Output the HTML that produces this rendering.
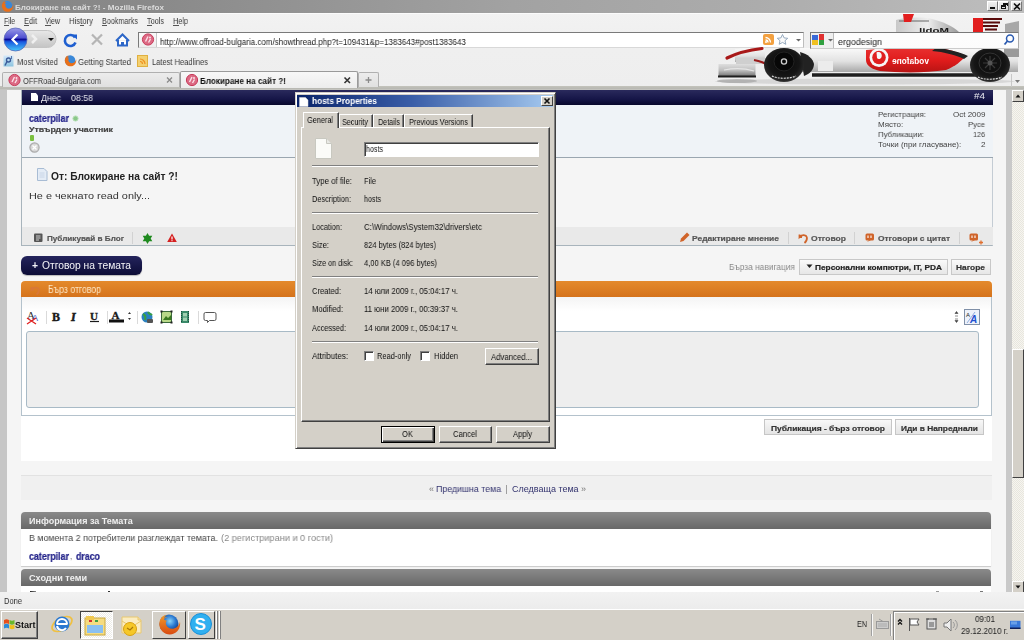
<!DOCTYPE html>
<html><head><meta charset="utf-8">
<style>
*{margin:0;padding:0;box-sizing:border-box}
html,body{width:1024px;height:640px;overflow:hidden;background:#f5f5f5;font-family:"Liberation Sans",sans-serif;position:relative}
.a{position:absolute}
.t{position:absolute;white-space:nowrap;transform-origin:0 0;will-change:transform}
svg{position:absolute;overflow:visible}
</style></head><body>
<div class="a" style="left:0px;top:88px;width:7px;height:505px;background:#c6c6c6"></div>
<div class="a" style="left:7px;top:88px;width:15px;height:505px;background:#f5f5f5"></div>
<div class="a" style="left:993px;top:88px;width:13px;height:505px;background:#f5f5f5"></div>
<div class="a" style="left:1006px;top:88px;width:6px;height:505px;background:#c9c9c9"></div>
<div class="a" style="left:0px;top:0px;width:1024px;height:13px;background:linear-gradient(90deg,#868686 0%,#8a8a8a 16%,#a2a2a2 50%,#acacac 74%,#bebebe 100%)"></div>
<div class="t" style="left:15px;top:4px;font-size:8px;line-height:8px;font-weight:bold;color:#dcdcdc;transform:scaleX(1.012);">Блокиране на сайт ?! - Mozilla Firefox</div>
<svg style="left:0;top:0" width="14" height="13">
<g transform="translate(0.5 0) scale(0.55)"><circle cx="12" cy="11" r="9.5" fill="#3a88d8"/><path d="M3.5 6c-2 4-1.5 9 2 12.5 4 4 11 4 15-0.5 2.5-3 3-6.5 2.5-9.5-0.5 3-2.5 6-6 7-3.5 1-7-1-8-4-0.5-1.5 0-3 1-4-1.5 0-2.5-0.5-3-1.5 1-1 2.5-1.5 4-1-1.5-1-3-1-4 0 0.5-1.5 1.5-2.5 3-3-3 0-5 1.5-6.5 4z" fill="#e8701a"/></g>
</svg>
<div class="a" style="left:987px;top:1px;width:11px;height:10px;background:linear-gradient(#f0f0f0,#d8d8d8);border:1px solid #fff;border-right-color:#777;border-bottom-color:#777"></div>
<div class="a" style="left:998px;top:1px;width:11px;height:10px;background:linear-gradient(#f0f0f0,#d8d8d8);border:1px solid #fff;border-right-color:#777;border-bottom-color:#777"></div>
<div class="a" style="left:1011px;top:1px;width:11px;height:10px;background:linear-gradient(#f0f0f0,#d8d8d8);border:1px solid #fff;border-right-color:#777;border-bottom-color:#777"></div>
<div class="a" style="left:990px;top:7px;width:5px;height:2px;background:#111"></div>
<div class="a" style="left:1001px;top:5px;width:5px;height:4px;border:1px solid #111;border-top-width:2px"></div>
<div class="a" style="left:1003px;top:3px;width:5px;height:3px;border-top:2px solid #111;border-right:1px solid #111"></div>
<svg style="left:1013px;top:3px" width="8" height="7"><path d="M1 0.5L7 6.5M7 0.5L1 6.5" stroke="#111" stroke-width="1.6"/></svg>
<div class="a" style="left:0px;top:13px;width:1024px;height:75px;background:linear-gradient(#f2f2f2 0%,#efefef 50%,#eeeeee 100%)"></div>
<div class="a" style="left:0px;top:13px;width:1024px;height:1px;background:#fbfbfb"></div>
<div class="t" style="left:4px;top:17px;font-size:9px;line-height:9px;color:#3a3a3a;transform:scaleX(0.759);">File</div>
<div class="t" style="left:24px;top:17px;font-size:9px;line-height:9px;color:#3a3a3a;transform:scaleX(0.838);">Edit</div>
<div class="t" style="left:45px;top:17px;font-size:9px;line-height:9px;color:#3a3a3a;transform:scaleX(0.775);">View</div>
<div class="t" style="left:69px;top:17px;font-size:9px;line-height:9px;color:#3a3a3a;transform:scaleX(0.857);">History</div>
<div class="t" style="left:102px;top:17px;font-size:9px;line-height:9px;color:#3a3a3a;transform:scaleX(0.800);">Bookmarks</div>
<div class="t" style="left:147px;top:17px;font-size:9px;line-height:9px;color:#3a3a3a;transform:scaleX(0.809);">Tools</div>
<div class="t" style="left:173px;top:17px;font-size:9px;line-height:9px;color:#3a3a3a;transform:scaleX(0.810);">Help</div>
<div class="a" style="left:4px;top:25px;width:5px;height:1px;background:#555"></div>
<div class="a" style="left:24px;top:25px;width:5px;height:1px;background:#555"></div>
<div class="a" style="left:45px;top:25px;width:6px;height:1px;background:#555"></div>
<div class="a" style="left:80px;top:25px;width:4px;height:1px;background:#555"></div>
<div class="a" style="left:102px;top:25px;width:5px;height:1px;background:#555"></div>
<div class="a" style="left:147px;top:25px;width:5px;height:1px;background:#555"></div>
<div class="a" style="left:173px;top:25px;width:6px;height:1px;background:#555"></div>
<svg style="left:0;top:26px" width="140" height="28">
<defs><linearGradient id="bk" x1="0" y1="0" x2="0" y2="1"><stop offset="0" stop-color="#9a9ae8"/><stop offset="0.42" stop-color="#5050d0"/><stop offset="0.5" stop-color="#0c0c98"/><stop offset="0.6" stop-color="#1a5ae0"/><stop offset="1" stop-color="#48c8f8"/></linearGradient>
<linearGradient id="fw" x1="0" y1="0" x2="0" y2="1"><stop offset="0" stop-color="#e8e8e8"/><stop offset="1" stop-color="#c4c4c4"/></linearGradient></defs>
<rect x="14" y="4.5" width="42" height="17" rx="8.5" fill="url(#fw)" stroke="#c4c4c4"/>
<path d="M32 9l4 4-4 4" stroke="#f0f0f0" stroke-width="2.5" fill="none"/>
<path d="M48 12h6l-3 3z" fill="#111"/>
<circle cx="15.5" cy="13.5" r="11.5" fill="url(#bk)" stroke="#5a6ab8" stroke-width="0.8"/>
<path d="M17.5 8.5l-5 5 5 5" stroke="#fff" stroke-width="2.2" fill="none"/>
<path d="M75 11.5a5.5 5.5 0 1 0 0.5 5" stroke="#1f5fd0" stroke-width="2.6" fill="none"/>
<path d="M71.5 8.5h5.5v5z" fill="#1f5fd0"/>
<path d="M92 8.5l10 10M102 8.5l-10 10" stroke="#b5b5b5" stroke-width="2.2"/>
<path d="M116 15l6.5-6.5 6.5 6.5M118 14v5.5h9v-5.5" stroke="#2d67c8" stroke-width="2" fill="#fff"/>
<rect x="121" y="16" width="3" height="3.5" fill="#2d67c8"/>
</svg>
<div class="a" style="left:138px;top:32px;width:666px;height:16px;background:#fff;border:1px solid #7a7a7a;border-right-color:#bdbdbd;border-bottom-color:#d8d8d8"></div>
<div class="a" style="left:139px;top:33px;width:18px;height:14px;background:linear-gradient(#fafafa,#eeeeee);border-right:1px solid #c8c8c8"></div>
<svg style="left:140px;top:33px" width="16" height="14"><circle cx="8" cy="6.5" r="5.6" fill="#dc6a84" stroke="#c83a5a" stroke-width="1"/><path d="M5.5 8.5l2.5-5M8.5 9.5l2-3.5" stroke="#fbe0e8" stroke-width="1.4"/><circle cx="10" cy="4.5" r="1" fill="#fbe0e8"/></svg>
<div class="t" style="left:160px;top:38px;font-size:9px;line-height:9px;color:#222;transform:scaleX(0.889);">http://www.offroad-bulgaria.com/showthread.php?t=109431&amp;p=1383643#post1383643</div>
<svg style="left:0;top:0" width="1024" height="88">
<defs>
<linearGradient id="cb" x1="0" y1="0" x2="0" y2="1"><stop offset="0" stop-color="#fafafa"/><stop offset="0.55" stop-color="#e2e2e2"/><stop offset="1" stop-color="#a8a8a8"/></linearGradient>
<linearGradient id="ab" x1="0" y1="0" x2="1" y2="0"><stop offset="0" stop-color="#c8c8c8"/><stop offset="0.5" stop-color="#eeeeee"/><stop offset="1" stop-color="#9a9a9a"/></linearGradient>
<linearGradient id="wg" x1="0" y1="0" x2="0" y2="1"><stop offset="0" stop-color="#dedede"/><stop offset="0.5" stop-color="#bdbdbd"/><stop offset="1" stop-color="#6a6a6a"/></linearGradient>
<linearGradient id="rd" x1="0" y1="0" x2="0" y2="1"><stop offset="0" stop-color="#e83030"/><stop offset="0.5" stop-color="#e01c1c"/><stop offset="1" stop-color="#b81414"/></linearGradient>
<radialGradient id="tyre" cx="50%" cy="45%" r="55%"><stop offset="0" stop-color="#080808"/><stop offset="0.7" stop-color="#151515"/><stop offset="0.92" stop-color="#262626"/><stop offset="1" stop-color="#3a3a3a"/></radialGradient>
</defs>
<ellipse cx="865" cy="81.5" rx="150" ry="3" fill="#d4d4d4" opacity="0.9"/>
<path d="M896 32v-12c12-3 26-3 36-1c12 3 20 7 27 13z" fill="url(#ab)"/>
<path d="M899 21h30" stroke="#666" stroke-width="1"/>
<path d="M903 14h11l-3 8h-7z" fill="#e21e1e"/>
<text x="-949" y="32.5" transform="scale(-1 1)" font-family="Liberation Sans" font-weight="bold" font-size="8" fill="#1a1a1a" textLength="30" lengthAdjust="spacingAndGlyphs">Mobil</text>
<path d="M1005 32v-8l14-3v11z" fill="#a8a8a8"/>
<rect x="973" y="18" width="10" height="14" fill="#e21e1e"/>
<path d="M983 19h19M983 22.5h17M983 26h15M985 29.5h12" stroke="#5a0c0c" stroke-width="2"/>
<path d="M800 48h218v24h-218z" fill="url(#cb)"/>
<path d="M1004 48h15v9h-15z" fill="#9a9a9a"/>
<path d="M735 49c10-1 20-1 30-1v13c-10 1-20 2-30 1z" fill="url(#cb)"/>
<path d="M727 58c10-5 22-8 35-9.5" stroke="#a81818" stroke-width="3.2" fill="none" stroke-linecap="round"/>
<path d="M736 58h30v6h-30z" fill="#cfcfcf"/>
<path d="M754 60c6 1 11 3 15 6" stroke="#9a1a1a" stroke-width="2" fill="none"/>
<rect x="718.5" y="64" width="37" height="13" fill="url(#wg)"/>
<path d="M724 70c10-2 20-2 30 1" stroke="#e6e6e6" stroke-width="1.2" fill="none"/>
<path d="M718 76.5h38" stroke="#1e1e1e" stroke-width="1.8"/>
<ellipse cx="737" cy="81" rx="20" ry="2" fill="#9a9a9a" opacity="0.6"/>
<path d="M818 61h15v10h-15z" fill="#ececec"/>
<path d="M812 75h190" stroke="#1e1e1e" stroke-width="3.5"/>
<path d="M866 50c25-2 55-2 74-2c12 2 20 5 26 8c-5 5-10 10-20 14c-20 3-45 3-66 1c-8-2-14-5-14-11c0-4 0-7 0-10z" fill="url(#rd)"/>
<path d="M936 48c12 1 24 4 32 8l-4 3c-8-4-20-7-32-8z" fill="#222"/>
<circle cx="879" cy="57.5" r="9.5" fill="#f6f6f6"/><circle cx="879" cy="57.5" r="6.8" fill="#e02020"/><path d="M876.5 52.5c3.5-1.5 6 1 5 4.5-1 2.5-3.5 2.5-4.5 1" fill="#f6f6f6"/>
<text x="-929" y="63.5" transform="scale(-1 1)" font-family="Liberation Sans" font-weight="bold" font-size="8.5" fill="#fff" textLength="37" lengthAdjust="spacingAndGlyphs">vodafone</text>
<path d="M800 52c8 2 13 7 14 12c0 5-4 10-10 12z" fill="#222"/>
<ellipse cx="784" cy="65" rx="20" ry="17" fill="url(#tyre)"/>
<ellipse cx="784" cy="61.5" rx="10" ry="9.5" fill="#070707" stroke="#222"/>
<circle cx="784" cy="61.5" r="2.6" fill="none" stroke="#cfcfcf" stroke-width="1.3"/>
<path d="M772 76c6 3 18 3 24 0" stroke="#ddd" stroke-width="1.2" fill="none" stroke-dasharray="2 1"/>
<ellipse cx="990" cy="65" rx="20" ry="17" fill="url(#tyre)"/>
<ellipse cx="990" cy="63" rx="11" ry="10" fill="#111" stroke="#333"/>
<path d="M983 63h14M990 56v14M985 58l10 10M995 58l-10 10" stroke="#3a3a3a" stroke-width="1.2"/>
<circle cx="990" cy="63" r="2.5" fill="#555"/>
<path d="M978 77c6 3 18 3 24 0" stroke="#ddd" stroke-width="1.2" fill="none" stroke-dasharray="2 1"/>
</svg>
<svg style="left:763px;top:34px" width="42" height="12">
<rect x="0" y="0" width="11" height="11" rx="2" fill="#f2a040"/>
<path d="M2.5 3.5a5 5 0 0 1 5 5M2.5 6a2.5 2.5 0 0 1 2.5 2.5" stroke="#fff" stroke-width="1.3" fill="none"/><circle cx="3" cy="8" r="1" fill="#fff"/>
<path d="M19.5 0.5l1.6 3.4 3.6 0.4-2.7 2.4 0.8 3.6-3.3-1.9-3.3 1.9 0.8-3.6-2.7-2.4 3.6-0.4z" fill="#fafafa" stroke="#8aa0b8" stroke-width="0.9"/>
<path d="M33 5h5l-2.5 2.5z" fill="#666"/>
</svg>
<div class="a" style="left:810px;top:32px;width:209px;height:17px;background:rgba(255,255,255,0.82);border:1px solid #7a7a7a;border-right-color:#aaa;border-bottom-color:#ccc"></div>
<div class="a" style="left:811px;top:33px;width:23px;height:15px;background:rgba(235,235,235,0.8);border-right:1px solid #bbb"></div>
<svg style="left:812px;top:34px" width="200" height="12">
<rect x="0" y="1" width="6" height="5" fill="#3a6ad8"/><rect x="7" y="0" width="5" height="6" fill="#e03030"/><rect x="0" y="6" width="6" height="5" fill="#f0c020"/><rect x="7" y="6" width="5" height="5" fill="#30a040"/>
<path d="M16 5h5l-2.5 2.5z" fill="#666"/>
<circle cx="198" cy="4.5" r="3.5" stroke="#2a5ab0" stroke-width="1.5" fill="none"/><path d="M195.5 7l-3 3.5" stroke="#2a5ab0" stroke-width="1.8"/>
</svg>
<div class="t" style="left:838px;top:38px;font-size:9px;line-height:9px;color:#222;transform:scaleX(0.988);">ergodesign</div>
<svg style="left:3px;top:55px" width="150" height="13">
<defs><linearGradient id="mv" x1="0" y1="0" x2="0" y2="1"><stop offset="0" stop-color="#d4e8fa"/><stop offset="1" stop-color="#8cc4e0"/></linearGradient></defs><rect x="0.5" y="0.5" width="10" height="11" fill="url(#mv)"/><circle cx="5.5" cy="5" r="2" fill="none" stroke="#3a5a98" stroke-width="1.4"/><path d="M4 6.5l-2 4" stroke="#3a5a98" stroke-width="1.4"/><path d="M8.5 1v3" stroke="#3a5a98" stroke-width="0.8"/>
<g transform="translate(60.5 -0.5) scale(0.55)"><circle cx="12" cy="11" r="9.5" fill="#3a88d8"/><path d="M3.5 6c-2 4-1.5 9 2 12.5 4 4 11 4 15-0.5 2.5-3 3-6.5 2.5-9.5-0.5 3-2.5 6-6 7-3.5 1-7-1-8-4-0.5-1.5 0-3 1-4-1.5 0-2.5-0.5-3-1.5 1-1 2.5-1.5 4-1-1.5-1-3-1-4 0 0.5-1.5 1.5-2.5 3-3-3 0-5 1.5-6.5 4z" fill="#e8701a"/></g>
<rect x="134.5" y="0.5" width="10" height="11" fill="#f4d070" stroke="#e0b040"/><path d="M137 4a5 5 0 0 1 5 5M137 6.5a2.5 2.5 0 0 1 2.5 2.5" stroke="#f09020" stroke-width="1.2" fill="none"/>
</svg>
<div class="t" style="left:17px;top:58px;font-size:9px;line-height:9px;color:#3a3a3a;transform:scaleX(0.839);">Most Visited</div>
<div class="t" style="left:78px;top:58px;font-size:9px;line-height:9px;color:#3a3a3a;transform:scaleX(0.876);">Getting Started</div>
<div class="t" style="left:152px;top:58px;font-size:9px;line-height:9px;color:#3a3a3a;transform:scaleX(0.835);">Latest Headlines</div>
<div class="a" style="left:0px;top:86px;width:1024px;height:4px;background:linear-gradient(#c4c4bc,#b8b8b2 60%,#c8c8c4)"></div>
<div class="a" style="left:2px;top:72px;width:178px;height:15px;background:linear-gradient(#ececec,#e0e0e0);border:1px solid #b0b0b0;border-bottom:none;border-radius:2px 2px 0 0"></div>
<div class="a" style="left:180px;top:71px;width:178px;height:17px;background:linear-gradient(#f8f8f8,#ececec);border:1px solid #9a9a9a;border-bottom:none;border-radius:2px 2px 0 0"></div>
<div class="a" style="left:358px;top:72px;width:21px;height:15px;background:linear-gradient(#ececec,#e0e0e0);border:1px solid #b0b0b0;border-bottom:none;border-radius:2px 2px 0 0"></div>
<svg style="left:0;top:70px" width="400" height="18">
<circle cx="14.5" cy="10" r="5.6" fill="#dc6a84" stroke="#c83a5a" stroke-width="1"/><path d="M12.0 12l2.5-5M15.0 13l2-3.5" stroke="#fbe0e8" stroke-width="1.4"/><circle cx="16.5" cy="8" r="1" fill="#fbe0e8"/>
<circle cx="192" cy="10" r="5.6" fill="#dc6a84" stroke="#c83a5a" stroke-width="1"/><path d="M189.5 12l2.5-5M192.5 13l2-3.5" stroke="#fbe0e8" stroke-width="1.4"/><circle cx="194" cy="8" r="1" fill="#fbe0e8"/>
<path d="M167 7.5l5 5M172 7.5l-5 5" stroke="#8a8a8a" stroke-width="1.3"/>
<path d="M344.5 7.5l5.5 5.5M350 7.5l-5.5 5.5" stroke="#333" stroke-width="1.6"/>
<path d="M368.5 7v6M365.5 10h6" stroke="#8a8a8a" stroke-width="1.3"/>
</svg>
<div class="t" style="left:23px;top:77px;font-size:9px;line-height:9px;color:#3a3a3a;transform:scaleX(0.821);">OFFRoad-Bulgaria.com</div>
<div class="t" style="left:200px;top:77px;font-size:9px;line-height:9px;font-weight:bold;color:#111;transform:scaleX(0.905);">Блокиране на сайт ?!</div>
<svg style="left:1012px;top:76px" width="12" height="12"><path d="M3 4h5l-2.5 3z" fill="#777"/></svg>
<div class="a" style="left:1011px;top:74px;width:1px;height:13px;background:#c8c8c8"></div>
<div class="a" style="left:1012px;top:90px;width:12px;height:503px;background:repeating-conic-gradient(#f6f5f0 0 25%,#e8e6de 0 50%) 0 0/2px 2px"></div>
<div class="a" style="left:1012px;top:90px;width:12px;height:12px;background:#d4d0c8;border:1px solid #fff;border-right-color:#404040;border-bottom-color:#404040"></div>
<svg style="left:1012px;top:90px" width="12" height="12"><path d="M3.5 7.5h5l-2.5-3z" fill="#111"/></svg>
<div class="a" style="left:1012px;top:349px;width:12px;height:129px;background:#d4d0c8;border:1px solid #fff;border-right-color:#404040;border-bottom-color:#404040"></div>
<div class="a" style="left:1012px;top:581px;width:12px;height:12px;background:#d4d0c8;border:1px solid #fff;border-right-color:#404040;border-bottom-color:#404040"></div>
<svg style="left:1012px;top:581px" width="12" height="12"><path d="M3.5 4.5h5l-2.5 3z" fill="#111"/></svg>
<div class="a" style="left:21px;top:90px;width:972px;height:156px;background:#f5f5f5;border:1px solid #a8b4bc;border-right-color:#c4ccd4;border-top:none"></div>
<div class="a" style="left:22px;top:90px;width:971px;height:15px;background:linear-gradient(#2a2a5c,#161648 60%,#08082c)"></div>
<div class="a" style="left:31px;top:93px;width:7px;height:8px;background:#fff;clip-path:polygon(0 0,70% 0,100% 30%,100% 100%,0 100%)"></div>
<div class="t" style="left:41px;top:94px;font-size:9px;line-height:9px;color:#e8e8f0;transform:scaleX(0.972);">Днес</div>
<div class="t" style="left:71px;top:94px;font-size:9px;line-height:9px;color:#e8e8f0;transform:scaleX(0.977);">08:58</div>
<div class="t" style="left:974px;top:92px;font-size:9px;line-height:9px;color:#e8e8f0;transform:scaleX(1.099);">#4</div>
<div class="a" style="left:22px;top:105px;width:971px;height:53px;background:#eff3f7;border-bottom:1px solid #9aa6b0"></div>
<div class="t" style="left:29px;top:114px;font-size:10px;line-height:10px;font-weight:bold;color:#24248a;transform:scaleX(0.888);-webkit-text-stroke:0.2px #24248a">caterpilar</div>
<svg style="left:72px;top:115px" width="8" height="8"><circle cx="3.5" cy="3.5" r="2.6" fill="#8ac88a" stroke="#b8e0b8"/></svg>
<div class="t" style="left:29px;top:126px;font-size:8px;line-height:8px;font-weight:bold;color:#444;transform:scaleX(1.100);-webkit-text-stroke:0.2px #444">Утвърден участник</div>
<div class="a" style="left:30px;top:135px;width:4px;height:6px;background:#7ac040;border-radius:1px"></div>
<svg style="left:29px;top:142px" width="12" height="11"><circle cx="5.5" cy="5.5" r="4.6" fill="#d8d8d8" stroke="#aaa" stroke-width="1.2"/><path d="M3.5 3.5l4 4M7.5 3.5l-4 4" stroke="#fff" stroke-width="1.3"/></svg>
<div class="t" style="left:878px;top:111px;font-size:8px;line-height:8px;color:#444;transform:scaleX(0.980);">Регистрация:</div>
<div class="t" style="left:953px;top:111px;font-size:8px;line-height:8px;color:#444;transform:scaleX(0.986);">Oct 2009</div>
<div class="t" style="left:878px;top:121px;font-size:8px;line-height:8px;color:#444;">Място:</div>
<div class="t" style="left:968px;top:121px;font-size:8px;line-height:8px;color:#444;transform:scaleX(0.961);">Русе</div>
<div class="t" style="left:878px;top:131px;font-size:8px;line-height:8px;color:#444;transform:scaleX(0.977);">Публикации:</div>
<div class="t" style="left:973px;top:131px;font-size:8px;line-height:8px;color:#444;transform:scaleX(0.899);">126</div>
<div class="t" style="left:878px;top:141px;font-size:8px;line-height:8px;color:#444;">Точки (при гласуване):</div>
<div class="t" style="left:980.5px;top:141px;font-size:8px;line-height:8px;color:#444;transform:scaleX(1.011);">2</div>
<svg style="left:37px;top:168px" width="11" height="13"><path d="M0.5 0.5h6.5l3 3v9h-9.5z" fill="#e4ecf6" stroke="#a8bcd4"/><path d="M2.5 5h5M2.5 7h5M2.5 9h5" stroke="#c0d0e4" stroke-width="0.8"/></svg>
<div class="t" style="left:51px;top:172px;font-size:10px;line-height:10px;font-weight:bold;color:#222;transform:scaleX(1.021);">От: Блокиране на сайт ?!</div>
<div class="t" style="left:29px;top:191px;font-size:9.5px;line-height:9.5px;color:#333;transform:scaleX(1.143);">Не е чекнато read only...</div>
<div class="a" style="left:22px;top:227px;width:971px;height:18px;background:#e9e9e9"></div>
<svg style="left:33px;top:232px" width="960" height="12">
<rect x="1" y="1.5" width="8.5" height="8.5" rx="1" fill="#555"/><path d="M3 4h4.5M3 6h4.5M3 8h3" stroke="#ddd" stroke-width="0.9"/>
<path d="M99.5 0v12" stroke="#d2d2d2"/>
<path d="M114.5 1l1.6 2.8 3.2-0.1-1.6 2.8 1.6 2.8-3.2-0.1-1.6 2.8-1.6-2.8-3.2 0.1 1.6-2.8-1.6-2.8 3.2 0.1z" fill="#1f8a1f"/>
<path d="M139 1.5l4.8 8.5h-9.6z" fill="#d42020"/><path d="M139 4.5v3" stroke="#fff" stroke-width="1.2"/><circle cx="139" cy="8.7" r="0.6" fill="#fff"/>
<path d="M647 10l1-3.5 6-6 2.5 2.5-6 6z" fill="#d0642a"/>
<path d="M755.5 0v12" stroke="#d2d2d2"/>
<path d="M774 5.5c-1-3-5-3-7.5-0.5l0-2.5m0 2.5h2.5M774 5.5c0 2-0.5 4-2.5 5.5" stroke="#d0642a" stroke-width="1.8" fill="none"/>
<path d="M821.5 0v12" stroke="#d2d2d2"/>
<rect x="832.5" y="1.5" width="8.5" height="7" rx="1.5" fill="#d0642a"/><path d="M834 10l2-2h2z" fill="#d0642a"/><path d="M835 3.5v2.5M838 3.5v2.5" stroke="#fff" stroke-width="1.1"/>
<path d="M926.5 0v12" stroke="#d2d2d2"/>
<rect x="936.5" y="1.5" width="8.5" height="7" rx="1.5" fill="#d0642a"/><path d="M938 10l2-2h2z" fill="#d0642a"/><path d="M939 3.5v2.5M942 3.5v2.5" stroke="#fff" stroke-width="1.1"/>
<path d="M948 8.5v4M946 10.5h4" stroke="#e07030" stroke-width="1.3"/>
</svg>
<div class="t" style="left:47px;top:235px;font-size:8px;line-height:8px;font-weight:bold;color:#555;transform:scaleX(1.015);-webkit-text-stroke:0.2px #555">Публикувай в Блог</div>
<div class="t" style="left:692px;top:235px;font-size:8px;line-height:8px;font-weight:bold;color:#555;transform:scaleX(1.058);-webkit-text-stroke:0.2px #555">Редактиране мнение</div>
<div class="t" style="left:811px;top:235px;font-size:8px;line-height:8px;font-weight:bold;color:#555;transform:scaleX(1.066);-webkit-text-stroke:0.2px #555">Отговор</div>
<div class="t" style="left:878px;top:235px;font-size:8px;line-height:8px;font-weight:bold;color:#555;transform:scaleX(1.047);-webkit-text-stroke:0.2px #555">Отговори с цитат</div>
<div class="a" style="left:21px;top:256px;width:121px;height:19px;background:linear-gradient(#24245c,#0c0c36);border-radius:6px;box-shadow:0 1px 1px rgba(0,0,0,0.25)"></div>
<div class="t" style="left:32px;top:261px;font-size:10px;line-height:10px;font-weight:bold;color:#f4f4f8;transform:scaleX(1.027);">+</div>
<div class="t" style="left:42px;top:261px;font-size:10px;line-height:10px;color:#f4f4f8;transform:scaleX(1.028);">Отговор на темата</div>
<div class="t" style="left:729px;top:262px;font-size:9.5px;line-height:9.5px;color:#8a8a8a;transform:scaleX(0.881);">Бърза навигация</div>
<div class="a" style="left:799px;top:259px;width:149px;height:16px;background:linear-gradient(#fafafa,#e6e6e6);border:1px solid #c8c8c8"></div>
<svg style="left:806px;top:264px" width="8" height="5"><path d="M0.5 0.5h6l-3 3.5z" fill="#222"/></svg>
<div class="t" style="left:815px;top:264px;font-size:8px;line-height:8px;font-weight:bold;color:#222;transform:scaleX(1.036);-webkit-text-stroke:0.2px #222">Персонални компютри, IT, PDA</div>
<div class="a" style="left:951px;top:259px;width:40px;height:16px;background:linear-gradient(#fafafa,#e6e6e6);border:1px solid #c8c8c8"></div>
<div class="t" style="left:956px;top:264px;font-size:8px;line-height:8px;font-weight:bold;color:#333;transform:scaleX(1.048);-webkit-text-stroke:0.2px #333">Нагоре</div>
<div class="a" style="left:21px;top:281px;width:971px;height:180px;background:#fff"></div>
<div class="a" style="left:21px;top:281px;width:971px;height:17px;background:linear-gradient(#e48a2c,#d5731c);border-bottom:1px solid #b4601c;border-radius:4px 4px 0 0"></div>
<svg style="left:29px;top:284px" width="12" height="11"><path d="M10 6c-1-3-5-3-7.5-0.5l0-2.5m0 2.5h2.5M10 6c0 2-0.5 3-2.5 4.5" stroke="#d87838" stroke-width="1.8" fill="none"/></svg>
<div class="t" style="left:48px;top:285px;font-size:10px;line-height:10px;color:#fde6c4;transform:scaleX(0.871);">Бърз отговор</div>
<div class="a" style="left:21px;top:297px;width:971px;height:119px;background:linear-gradient(#f4f4f4 0,#ffffff 14px);border:1px solid #b4c2cc;border-top:none"></div>
<div class="a" style="left:26px;top:331px;width:953px;height:77px;background:#eeeeee;border:1px solid #a8bac6;border-radius:3px"></div>
<svg style="left:26px;top:309px" width="960" height="17">
<text x="1" y="10" font-family="Liberation Serif" font-size="11" fill="#333">A</text><text x="6" y="12" font-family="Liberation Sans" font-size="9" fill="#3050c0">A</text><path d="M1 9l9 6M10 9l-9 6" stroke="#e02020" stroke-width="1.3"/>
<path d="M20.5 2v13" stroke="#dadada"/>
<text x="26" y="12" font-family="Liberation Serif" font-weight="bold" font-size="12" fill="#1a1a1a" stroke="#1a1a1a" stroke-width="0.4">B</text>
<text x="45" y="12" font-family="Liberation Serif" font-weight="bold" font-style="italic" font-size="12" fill="#1a1a1a" stroke="#1a1a1a" stroke-width="0.5">I</text>
<text x="64" y="11" font-family="Liberation Serif" font-weight="bold" font-size="11" fill="#1a1a1a" stroke="#1a1a1a" stroke-width="0.3">U</text><path d="M64 12.5h9" stroke="#1a1a1a" stroke-width="1.2"/>
<path d="M81.5 2v13" stroke="#dadada"/>
<text x="85.5" y="10" font-family="Liberation Serif" font-weight="bold" font-size="11" fill="#1a1a1a" stroke="#1a1a1a" stroke-width="0.3">A</text><rect x="83" y="10.5" width="15" height="3" fill="#111"/>
<path d="M102 5l1.5-2 1.5 2zM102 9l1.5 2 1.5-2z" fill="#333"/>
<path d="M111.5 2v13" stroke="#dadada"/>
<circle cx="121" cy="8" r="5.5" fill="#2a80c0"/><path d="M117 5c2 1 3 3 2 6M122 3c1 2 3 3 4 2" stroke="#3aa040" stroke-width="2" fill="none"/><rect x="121" y="10" width="6" height="4" rx="1" fill="#555"/>
<rect x="135.5" y="2.5" width="10" height="11" fill="#b8d888" stroke="#3a6a3a"/><path d="M137 11l3-4 2 2 3-3v5z" fill="#3a7a20"/><rect x="134.5" y="1.5" width="2" height="2" fill="#222"/><rect x="144.5" y="1.5" width="2" height="2" fill="#222"/><rect x="134.5" y="12.5" width="2" height="2" fill="#222"/><rect x="144.5" y="12.5" width="2" height="2" fill="#222"/>
<rect x="155" y="2" width="8" height="12" fill="#3a8a6a"/><path d="M155.5 2v12M162.5 2v12" stroke="#1a4a3a" stroke-dasharray="1 1"/><rect x="157" y="4" width="4" height="3.5" fill="#a0d0b0"/><rect x="157" y="8.5" width="4" height="3.5" fill="#a0d0b0"/>
<path d="M172.5 2v13" stroke="#dadada"/>
<path d="M179.5 3.5h9a1.5 1.5 0 0 1 1.5 1.5v5a1.5 1.5 0 0 1-1.5 1.5h-5l-2 2v-2h-2a1.5 1.5 0 0 1-1.5-1.5v-5a1.5 1.5 0 0 1 1.5-1.5z" fill="#fff" stroke="#555"/>
<path d="M929 4.5l1.5-2 1.5 2zM929 7l3 0M929 11.5l1.5 2 1.5-2zM929 10h3" stroke="#444" fill="#444" stroke-width="0.6"/>
<rect x="938.5" y="0.5" width="15" height="15" fill="#eef2fa" stroke="#8090a8"/><text x="940" y="8" font-family="Liberation Sans" font-size="6" fill="#222">A</text><path d="M941 14l8-11" stroke="#90b0e0"/><text x="944" y="14" font-family="Liberation Sans" font-weight="bold" font-style="italic" font-size="10" fill="#2050d0">A</text>
</svg>
<div class="a" style="left:764px;top:419px;width:128px;height:16px;background:linear-gradient(#f8f8f8,#e4e4e4);border:1px solid #c6c6c6"></div>
<div class="t" style="left:771px;top:425px;font-size:8px;line-height:8px;font-weight:bold;color:#333;transform:scaleX(1.056);-webkit-text-stroke:0.2px #333">Публикация - бърз отговор</div>
<div class="a" style="left:895px;top:419px;width:89px;height:16px;background:linear-gradient(#f8f8f8,#e4e4e4);border:1px solid #c6c6c6"></div>
<div class="t" style="left:901px;top:425px;font-size:8px;line-height:8px;font-weight:bold;color:#333;transform:scaleX(1.042);-webkit-text-stroke:0.2px #333">Иди в Напреднали</div>
<div class="a" style="left:21px;top:475px;width:971px;height:1px;background:#e2e2e2"></div>
<div class="a" style="left:21px;top:476px;width:971px;height:24px;background:#f0f0f0"></div>
<div class="t" style="left:429px;top:485px;font-size:9px;line-height:9px;color:#777;">«</div>
<div class="t" style="left:436px;top:485px;font-size:9px;line-height:9px;color:#33336e;transform:scaleX(0.978);">Предишна тема</div>
<div class="t" style="left:505px;top:485px;font-size:9px;line-height:9px;color:#999;transform:scaleX(1.283);">|</div>
<div class="t" style="left:512px;top:485px;font-size:9px;line-height:9px;color:#33336e;">Следваща тема</div>
<div class="t" style="left:581px;top:485px;font-size:9px;line-height:9px;color:#777;">»</div>
<div class="a" style="left:21px;top:512px;width:970px;height:54px;background:#fff;border-radius:4px 4px 0 0;box-shadow:0 1px 1px rgba(0,0,0,0.18)"></div>
<div class="a" style="left:21px;top:512px;width:970px;height:17px;background:linear-gradient(#8a8a8a,#686868);border-radius:4px 4px 0 0"></div>
<div class="t" style="left:29px;top:517px;font-size:9px;line-height:9px;font-weight:bold;color:#f0f0f0;">Информация за Темата</div>
<div class="t" style="left:29px;top:533px;font-size:9.5px;line-height:9.5px;color:#444;transform:scaleX(0.933);">В момента 2 потребители разглеждат темата.</div>
<div class="t" style="left:221px;top:533px;font-size:9.5px;line-height:9.5px;color:#888;transform:scaleX(0.967);">(2 регистрирани и 0 гости)</div>
<div class="t" style="left:29px;top:552px;font-size:10px;line-height:10px;font-weight:bold;color:#24248a;transform:scaleX(0.888);-webkit-text-stroke:0.2px #24248a">caterpilar</div>
<div class="t" style="left:70px;top:552px;font-size:9px;line-height:9px;color:#555;transform:scaleX(0.800);">,</div>
<div class="t" style="left:75.5px;top:552px;font-size:10px;line-height:10px;font-weight:bold;color:#24248a;transform:scaleX(0.881);-webkit-text-stroke:0.2px #24248a">draco</div>
<div class="a" style="left:21px;top:569px;width:970px;height:24px;background:#fff;border-radius:4px 4px 0 0"></div>
<div class="a" style="left:21px;top:569px;width:970px;height:17px;background:linear-gradient(#8a8a8a,#686868);border-radius:4px 4px 0 0"></div>
<div class="t" style="left:29px;top:574px;font-size:9px;line-height:9px;font-weight:bold;color:#f0f0f0;transform:scaleX(1.012);">Сходни теми</div>
<div class="a" style="left:30px;top:590.5px;width:6px;height:2px;background:linear-gradient(90deg,#222,#888)"></div>
<div class="a" style="left:108px;top:590.5px;width:2px;height:2px;background:#333"></div>
<div class="a" style="left:936px;top:591px;width:3px;height:1px;background:#999"></div>
<div class="a" style="left:980px;top:591px;width:3px;height:1px;background:#777"></div>
<div class="a" style="left:0px;top:592px;width:1024px;height:17px;background:linear-gradient(#f2f2f2,#ececec)"></div>
<div class="t" style="left:4px;top:597px;font-size:9px;line-height:9px;color:#333;transform:scaleX(0.837);">Done</div>
<div class="a" style="left:0px;top:609px;width:1024px;height:31px;background:#d4d0c8;border-top:1px solid #fff"></div>
<div class="a" style="left:1px;top:611px;width:37px;height:28px;background:#d4d0c8;border:1px solid #fff;border-right-color:#404040;border-bottom-color:#404040;box-shadow:inset -1px -1px #808080"></div>
<svg style="left:3px;top:618px" width="12" height="12">
<path d="M1 2c2-1 3-1 5 0v4c-2-1-3-1-5 0z" fill="#e8501a"/><path d="M6.5 2c2 1 3 1 5 0v4c-2 1-3 1-5 0z" fill="#6ab82a"/>
<path d="M1 6.5c2-1 3-1 5 0v4c-2-1-3-1-5 0z" fill="#2a8ad8"/><path d="M6.5 6.5c2 1 3 1 5 0v4c-2 1-3 1-5 0z" fill="#f0c01a"/>
</svg>
<div class="t" style="left:15px;top:621px;font-size:9px;line-height:9px;font-weight:bold;color:#111;">Start</div>
<div class="a" style="left:80px;top:611px;width:33px;height:28px;background:repeating-conic-gradient(#fff 0 25%,#ecebe6 0 50%) 0 0/2px 2px;border:1px solid #404040;border-right-color:#fff;border-bottom-color:#fff"></div>
<div class="a" style="left:152px;top:611px;width:34px;height:28px;background:#d4d0c8;border:1px solid #fff;border-right-color:#404040;border-bottom-color:#404040"></div>
<div class="a" style="left:188px;top:611px;width:27px;height:28px;background:#d4d0c8;border:1px solid #fff;border-right-color:#404040;border-bottom-color:#404040"></div>
<div class="a" style="left:216px;top:611px;width:2px;height:28px;background:#fff;border-right:1px solid #808080"></div>
<div class="a" style="left:219px;top:611px;width:2px;height:28px;background:#fff;border-right:1px solid #808080"></div>
<svg style="left:50px;top:612px" width="170" height="26">
<ellipse cx="12" cy="12" rx="11" ry="6" fill="none" stroke="#f0c040" stroke-width="1.6" transform="rotate(-30 12 12)"/>
<circle cx="12" cy="12" r="7.5" fill="#2a78d0"/><path d="M6.5 12h11M7 12a5 5 0 0 1 10 0" stroke="#fff" stroke-width="2" fill="none"/><path d="M7 14a5 5 0 0 0 9 2" stroke="#fff" stroke-width="2" fill="none"/>
<rect x="35" y="6" width="20" height="17" fill="#f6dc80" stroke="#c8a840"/><rect x="36" y="4" width="8" height="4" fill="#f0c850"/><rect x="37" y="13" width="16" height="8" fill="#8ac0f0"/><rect x="39" y="8" width="3" height="2" fill="#d83030"/><rect x="45" y="8" width="3" height="2" fill="#40a040"/>
<path d="M72 5h16l3 3v13h-19z" fill="#fbecc0" stroke="#e8c870"/><path d="M72 9l9.5 6 9.5-6" fill="none" stroke="#e8c870"/><path d="M88 5v3h3" fill="#f4dca0" stroke="#e8c870"/><circle cx="80" cy="17" r="6.5" fill="#f6c828" stroke="#d8a010"/><path d="M77 16l3 2 3-3" stroke="#a87808" stroke-width="1.2" fill="none"/>
<g transform="translate(107 1) scale(1.0)"><defs><radialGradient id="ffg" cx="55%" cy="35%" r="60%"><stop offset="0" stop-color="#8ad4f8"/><stop offset="0.5" stop-color="#2a78d0"/><stop offset="1" stop-color="#10307a"/></radialGradient><linearGradient id="ffo" x1="0" y1="0" x2="0" y2="1"><stop offset="0" stop-color="#f29a2a"/><stop offset="1" stop-color="#d84a10"/></linearGradient></defs><circle cx="12" cy="11" r="9.5" fill="url(#ffg)"/><path d="M3.5 6c-2 4-1.5 9 2 12.5 4 4 11 4 15-0.5 2.5-3 3-6.5 2.5-9.5-0.5 3-2.5 6-6 7-3.5 1-7-1-8-4-0.5-1.5 0-3 1-4-1.5 0-2.5-0.5-3-1.5 1-1 2.5-1.5 4-1-1.5-1-3-1-4 0 0.5-1.5 1.5-2.5 3-3-3 0-5 1.5-6.5 4z" fill="url(#ffo)"/></g>
<circle cx="151" cy="12" r="10.5" fill="#30b0f0" stroke="#1a90d8"/><text x="144.5" y="18" font-family="Liberation Sans" font-weight="bold" font-size="17" fill="#fff">S</text>
</svg>
<div class="t" style="left:857px;top:620px;font-size:9px;line-height:9px;color:#222;transform:scaleX(0.800);">EN</div>
<div class="a" style="left:871px;top:614px;width:2px;height:22px;border-left:1px solid #a0a0a0;border-right:1px solid #f8f8f8"></div>
<svg style="left:876px;top:618px" width="14" height="12"><rect x="0.5" y="3.5" width="12" height="7" fill="#ccc" stroke="#999"/><path d="M3 1l4 2.5" stroke="#999"/><path d="M2 6h9M2 8h9" stroke="#aaa"/></svg>
<div class="a" style="left:890px;top:614px;width:2px;height:22px;border-left:1px solid #a0a0a0;border-right:1px solid #f8f8f8"></div>
<div class="a" style="left:893px;top:611px;width:131px;height:29px;border:1px solid #808080;border-right:none;border-bottom:none;box-shadow:inset 1px 1px #fff"></div>
<svg style="left:896px;top:617px" width="128" height="16">
<path d="M2 4.5l2-2 2 2M2 7.5l2-2 2 2" stroke="#111" stroke-width="1.3" fill="none"/>
<path d="M13.5 1v13" stroke="#555"/><path d="M14 2h9l-2 3 2 3h-9z" fill="#fff" stroke="#555"/>
<rect x="31" y="2" width="9" height="10" fill="#ddd" stroke="#555"/><rect x="33" y="5" width="5" height="5" fill="#999"/><path d="M30 2h3M37 2h4" stroke="#555"/>
<path d="M48 6h3l4-4v12l-4-4h-3z" fill="#eee" stroke="#777"/><path d="M57 5a4 4 0 0 1 0 6M59 3a6.5 6.5 0 0 1 0 10" stroke="#999" fill="none"/>
<rect x="114" y="3.8" width="10.5" height="8" fill="#3a78d8"/><rect x="115" y="4.5" width="6" height="3" fill="#6aa0e8"/><rect x="114" y="10.5" width="10.5" height="1.5" fill="#10205a"/>
</svg>
<div class="t" style="left:975px;top:615px;font-size:9px;line-height:9px;color:#222;transform:scaleX(0.888);">09:01</div>
<div class="t" style="left:961px;top:627px;font-size:9px;line-height:9px;color:#222;transform:scaleX(0.900);">29.12.2010 г.</div>
<div class="a" style="left:295px;top:92px;width:261px;height:357px;background:#d4d0c8;border:1px solid #d4d0c8;border-right-color:#404040;border-bottom-color:#404040;box-shadow:inset 1px 1px #fff,inset -1px -1px #808080"></div>
<div class="a" style="left:297px;top:95px;width:256px;height:12px;background:linear-gradient(90deg,#0a246a 0%,#3a5ea8 45%,#a6caf0 100%)"></div>
<svg style="left:299px;top:97px" width="10" height="10"><path d="M0.5 0.5h6l2.5 2.5v6.5h-8.5z" fill="#fff" stroke="#ddd" stroke-width="0.5"/></svg>
<div class="t" style="left:312px;top:97px;font-size:8.5px;line-height:8.5px;font-weight:bold;color:#fff;transform:scaleX(0.969);">hosts Properties</div>
<div class="a" style="left:541px;top:96px;width:12px;height:10px;background:#d4d0c8;border:1px solid #fff;border-right-color:#404040;border-bottom-color:#404040"></div>
<svg style="left:541px;top:96px" width="12" height="10"><path d="M3.5 2.5l5 5M8.5 2.5l-5 5" stroke="#111" stroke-width="1.6"/></svg>
<div class="a" style="left:301px;top:127px;width:249px;height:295px;border:1px solid #fff;border-right-color:#404040;border-bottom-color:#404040;box-shadow:inset -1px -1px #808080"></div>
<div class="a" style="left:339px;top:114px;width:34px;height:13px;border:1px solid #fff;border-right-color:#404040;border-bottom:none;box-shadow:inset -1px 0 #808080"></div>
<div class="a" style="left:373px;top:114px;width:31px;height:13px;border:1px solid #fff;border-right-color:#404040;border-bottom:none;box-shadow:inset -1px 0 #808080"></div>
<div class="a" style="left:404px;top:114px;width:69px;height:13px;border:1px solid #fff;border-right-color:#404040;border-bottom:none;box-shadow:inset -1px 0 #808080"></div>
<div class="a" style="left:303px;top:112px;width:36px;height:16px;background:#d4d0c8;border:1px solid #fff;border-right-color:#404040;border-bottom:none;box-shadow:inset -1px 0 #808080"></div>
<div class="t" style="left:307px;top:115px;font-size:9.5px;line-height:9.5px;color:#111;transform:scaleX(0.769);">General</div>
<div class="t" style="left:342px;top:117px;font-size:9.5px;line-height:9.5px;color:#111;transform:scaleX(0.758);">Security</div>
<div class="t" style="left:378px;top:117px;font-size:9.5px;line-height:9.5px;color:#111;transform:scaleX(0.758);">Details</div>
<div class="t" style="left:409px;top:117px;font-size:9.5px;line-height:9.5px;color:#111;transform:scaleX(0.776);">Previous Versions</div>
<svg style="left:315px;top:138px" width="18" height="21"><path d="M0.5 0.5h11l5 5v15h-16z" fill="#fbfbf8" stroke="#c8c8c0"/><path d="M11.5 0.5v5h5" fill="#e8e8e4" stroke="#c8c8c0"/></svg>
<div class="a" style="left:364px;top:142px;width:175px;height:15px;background:#fff;border:1px solid #808080;border-right-color:#fff;border-bottom-color:#fff;box-shadow:inset 1px 1px #404040"></div>
<div class="t" style="left:366px;top:145px;font-size:9px;line-height:9px;color:#111;transform:scaleX(0.790);">hosts</div>
<div class="a" style="left:312px;top:165px;width:226px;height:2px;border-top:1px solid #808080;border-bottom:1px solid #fff"></div>
<div class="a" style="left:312px;top:212px;width:226px;height:2px;border-top:1px solid #808080;border-bottom:1px solid #fff"></div>
<div class="a" style="left:312px;top:276px;width:226px;height:2px;border-top:1px solid #808080;border-bottom:1px solid #fff"></div>
<div class="a" style="left:312px;top:341px;width:226px;height:2px;border-top:1px solid #808080;border-bottom:1px solid #fff"></div>
<div class="t" style="left:312px;top:177px;font-size:9px;line-height:9px;color:#111;transform:scaleX(0.869);">Type of file:</div>
<div class="t" style="left:364px;top:177px;font-size:9px;line-height:9px;color:#111;transform:scaleX(0.827);">File</div>
<div class="t" style="left:312px;top:195px;font-size:9px;line-height:9px;color:#111;transform:scaleX(0.821);">Description:</div>
<div class="t" style="left:364px;top:195px;font-size:9px;line-height:9px;color:#111;transform:scaleX(0.790);">hosts</div>
<div class="t" style="left:312px;top:223px;font-size:9px;line-height:9px;color:#111;transform:scaleX(0.821);">Location:</div>
<div class="t" style="left:364px;top:223px;font-size:9px;line-height:9px;color:#111;transform:scaleX(0.877);">C:\Windows\System32\drivers\etc</div>
<div class="t" style="left:312px;top:241px;font-size:9px;line-height:9px;color:#111;transform:scaleX(0.850);">Size:</div>
<div class="t" style="left:364px;top:241px;font-size:9px;line-height:9px;color:#111;transform:scaleX(0.832);">824 bytes (824 bytes)</div>
<div class="t" style="left:312px;top:259px;font-size:9px;line-height:9px;color:#111;transform:scaleX(0.804);">Size on disk:</div>
<div class="t" style="left:364px;top:259px;font-size:9px;line-height:9px;color:#111;transform:scaleX(0.839);">4,00 KB (4 096 bytes)</div>
<div class="t" style="left:312px;top:287px;font-size:9px;line-height:9px;color:#111;transform:scaleX(0.840);">Created:</div>
<div class="t" style="left:364px;top:287px;font-size:9px;line-height:9px;color:#111;transform:scaleX(0.864);">14 юли 2009 г., 05:04:17 ч.</div>
<div class="t" style="left:312px;top:305px;font-size:9px;line-height:9px;color:#111;transform:scaleX(0.849);">Modified:</div>
<div class="t" style="left:364px;top:305px;font-size:9px;line-height:9px;color:#111;transform:scaleX(0.870);">11 юни 2009 г., 00:39:37 ч.</div>
<div class="t" style="left:312px;top:324px;font-size:9px;line-height:9px;color:#111;transform:scaleX(0.819);">Accessed:</div>
<div class="t" style="left:364px;top:324px;font-size:9px;line-height:9px;color:#111;transform:scaleX(0.864);">14 юли 2009 г., 05:04:17 ч.</div>
<div class="t" style="left:312px;top:352px;font-size:9px;line-height:9px;color:#111;transform:scaleX(0.889);">Attributes:</div>
<div class="a" style="left:364px;top:351px;width:10px;height:10px;background:#fff;border:1px solid #808080;border-right-color:#fff;border-bottom-color:#fff;box-shadow:inset 1px 1px #404040"></div>
<div class="t" style="left:377px;top:352px;font-size:9px;line-height:9px;color:#111;transform:scaleX(0.829);">Read-only</div>
<div class="a" style="left:420px;top:351px;width:10px;height:10px;background:#fff;border:1px solid #808080;border-right-color:#fff;border-bottom-color:#fff;box-shadow:inset 1px 1px #404040"></div>
<div class="t" style="left:434px;top:352px;font-size:9px;line-height:9px;color:#111;transform:scaleX(0.842);">Hidden</div>
<div class="a" style="left:485px;top:348px;width:54px;height:17px;background:#d4d0c8;border:1px solid #fff;border-right-color:#404040;border-bottom-color:#404040;box-shadow:inset -1px -1px #808080"></div>
<div class="t" style="left:491px;top:353px;font-size:9px;line-height:9px;color:#111;transform:scaleX(0.863);">Advanced...</div>
<div class="a" style="left:381px;top:426px;width:54px;height:17px;background:#d4d0c8;border:1px solid #000;box-shadow:inset 1px 1px #fff,inset -1px -1px #404040,inset -2px -2px #808080"></div>
<div class="t" style="left:402px;top:430px;font-size:9px;line-height:9px;color:#111;transform:scaleX(0.846);">OK</div>
<div class="a" style="left:439px;top:426px;width:53px;height:17px;background:#d4d0c8;border:1px solid #fff;border-right-color:#404040;border-bottom-color:#404040;box-shadow:inset -1px -1px #808080"></div>
<div class="t" style="left:453px;top:430px;font-size:9px;line-height:9px;color:#111;transform:scaleX(0.857);">Cancel</div>
<div class="a" style="left:496px;top:426px;width:54px;height:17px;background:#d4d0c8;border:1px solid #fff;border-right-color:#404040;border-bottom-color:#404040;box-shadow:inset -1px -1px #808080"></div>
<div class="t" style="left:513px;top:430px;font-size:9px;line-height:9px;color:#111;transform:scaleX(0.844);">Apply</div>
</body></html>
